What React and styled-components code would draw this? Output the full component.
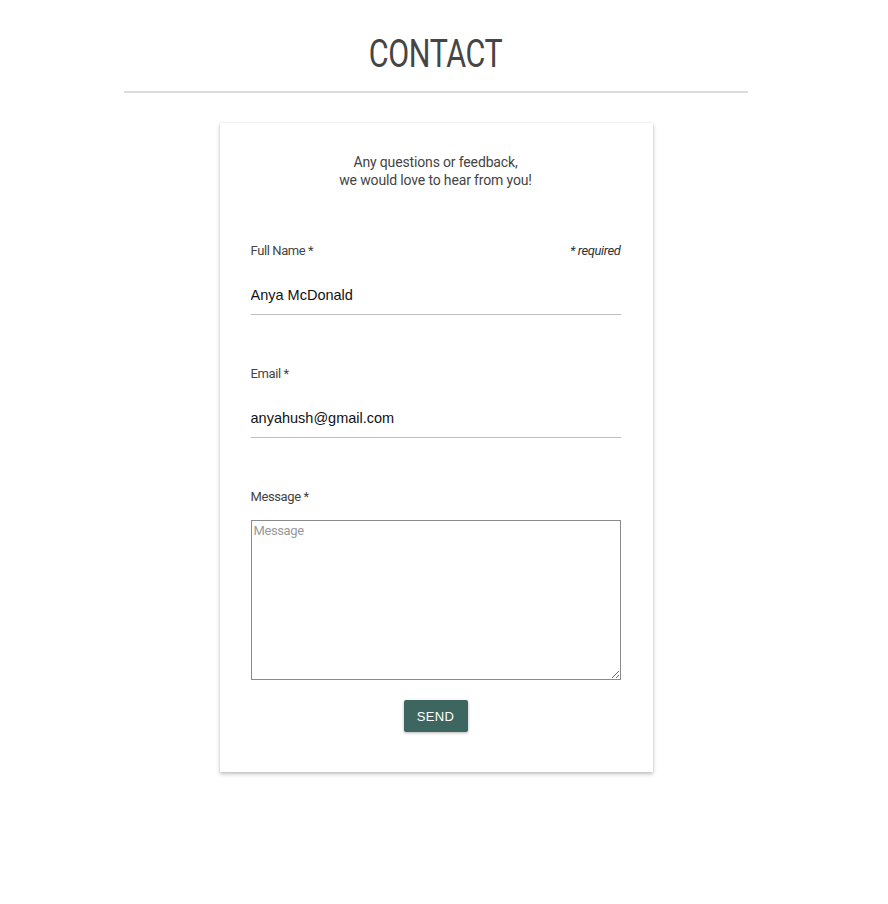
import React, { useState } from 'react';
import styled, { createGlobalStyle } from 'styled-components';

const GlobalStyle = createGlobalStyle`
  body {
    margin: 0;
    background: #fff;
    font-family: 'Roboto', 'Liberation Sans', sans-serif;
  }
`;

const Page = styled.div`
  width: 872px;
  min-height: 904px;
  box-sizing: border-box;
  display: flex;
  flex-direction: column;
  align-items: center;
  padding: 31px 0 40px;
`;

const Title = styled.h1`
  margin: 0;
  font-family: 'Roboto', sans-serif;
  font-weight: 400;
  font-size: 39px;
  line-height: 46px;
  letter-spacing: -0.5px;
  color: #454545;
  transform: scaleX(0.78);
`;

const Divider = styled.hr`
  width: 624px;
  margin: 14px 0 30px;
  border: none;
  border-top: 2px solid #dcdcdc;
`;

const Card = styled.form`
  width: 433px;
  box-sizing: border-box;
  padding: 30px 32px 40px 31px;
  background: #fff;
  box-shadow: 0 2px 4px rgba(0, 0, 0, 0.25), 0 0 2px rgba(0, 0, 0, 0.08);
  display: flex;
  flex-direction: column;
`;

const Intro = styled.p`
  margin: 0 0 53px;
  text-align: center;
  font-size: 14px;
  line-height: 18px;
  letter-spacing: -0.15px;
  color: #444;
`;

const Field = styled.div`
  display: flex;
  flex-direction: column;
  margin-bottom: ${p => p.$gap ?? 50}px;
`;

const LabelRow = styled.div`
  display: flex;
  justify-content: space-between;
  align-items: center;
  height: 16px;
  margin-bottom: ${p => p.$gap ?? 18}px;
`;

const Label = styled.label`
  font-size: 13px;
  letter-spacing: -0.4px;
  color: #444;
`;

const Required = styled.span`
  font-size: 13px;
  font-style: italic;
  letter-spacing: -0.4px;
  color: #333;
`;

const Input = styled.input`
  height: 39px;
  box-sizing: border-box;
  padding: 0;
  border: none;
  border-bottom: 1px solid #bdbdbd;
  outline: none;
  font-family: 'Liberation Sans', Arial, sans-serif;
  font-size: 14.5px;
  color: #111;
  background: transparent;
`;

const TextArea = styled.textarea`
  height: 160px;
  box-sizing: border-box;
  padding: 2px 2px;
  border: 1px solid #8a8a8a;
  resize: vertical;
  font-family: 'Roboto', sans-serif;
  font-size: 13px;
  letter-spacing: -0.4px;
  color: #222;
  outline: none;

  &::placeholder {
    color: #9a9a9a;
  }
`;

const Actions = styled.div`
  display: flex;
  justify-content: center;
  margin-top: 20px;
`;

const SendButton = styled.button`
  width: 64px;
  height: 32px;
  border: none;
  border-radius: 2px;
  background: #3e6661;
  color: #fff;
  font-family: 'Liberation Sans', Arial, sans-serif;
  font-size: 13px;
  letter-spacing: 0.3px;
  text-transform: uppercase;
  box-shadow: 0 1px 3px rgba(0, 0, 0, 0.3);
  cursor: pointer;
`;

const App = () => {
  const [name, setName] = useState('Anya McDonald');
  const [email, setEmail] = useState('anyahush@gmail.com');
  const [message, setMessage] = useState('');

  return (
    <>
      <GlobalStyle />
      <Page>
        <Title>CONTACT</Title>
        <Divider />
        <Card onSubmit={e => e.preventDefault()}>
          <Intro>
            Any questions or feedback,
            <br />
            we would love to hear from you!
          </Intro>

          <Field>
            <LabelRow>
              <Label htmlFor="name">Full Name *</Label>
              <Required>* required</Required>
            </LabelRow>
            <Input id="name" value={name} onChange={e => setName(e.target.value)} />
          </Field>

          <Field>
            <LabelRow>
              <Label htmlFor="email">Email *</Label>
            </LabelRow>
            <Input id="email" value={email} onChange={e => setEmail(e.target.value)} />
          </Field>

          <Field $gap={0}>
            <LabelRow $gap={16}>
              <Label htmlFor="message">Message *</Label>
            </LabelRow>
            <TextArea
              id="message"
              placeholder="Message"
              value={message}
              onChange={e => setMessage(e.target.value)}
            />
          </Field>

          <Actions>
            <SendButton type="submit">Send</SendButton>
          </Actions>
        </Card>
      </Page>
    </>
  );
};

export default App;
